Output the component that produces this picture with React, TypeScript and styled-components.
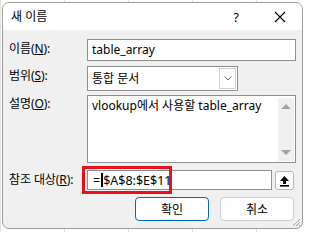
import React from 'react';
import styled, { createGlobalStyle } from 'styled-components';

const GlobalStyle = createGlobalStyle`
  html, body {
    margin: 0;
    padding: 0;
    background: #ffffff;
  }
  body {
    font-family: "Noto Sans", "Noto Sans CJK KR", sans-serif;
    font-size: 12px;
    color: #000;
  }
`;

const Backdrop = styled.div`
  width: 303px;
  height: 232px;
  overflow: hidden;
  padding: 2px 0 0 2px;
  box-sizing: border-box;
  background: linear-gradient(to right, #e2e2e2 1px, transparent 1px) 0 0 / 64px 100%, #fff;
`;

const Window = styled.div`
  position: relative;
  width: 301px;
  height: 227px;
  box-sizing: border-box;
  border: 1px solid #9c9c9c;
  border-radius: 7px;
  background: #f0f0f0;
  overflow: hidden;
  display: flex;
  flex-direction: column;
`;

const TitleBar = styled.div`
  height: 27px;
  flex: none;
  background: #fff;
  display: flex;
  align-items: center;
  padding-left: 8px;
  font-size: 12px;
  line-height: 14px;
`;

const Title = styled.span`
  flex: 1;
  padding-top: 1px;
`;

const TitleButton = styled.span`
  width: 44px;
  height: 27px;
  display: flex;
  align-items: center;
  justify-content: center;
  font-size: 13px;
`;

const Body = styled.div`
  padding: 9px 6px 0 6px;
  display: flex;
  flex-direction: column;
`;

const Row = styled.div<{ $height: number; $gap?: number }>`
  display: grid;
  grid-template-columns: 78px 1fr;
  height: ${p => p.$height}px;
  margin-top: ${p => p.$gap ?? 0}px;
`;

const Label = styled.label<{ $offset?: number }>`
  padding-top: ${p => p.$offset ?? 3}px;
  line-height: 14px;
  white-space: nowrap;
  letter-spacing: -0.1px;
`;

const TextBox = styled.div`
  box-sizing: border-box;
  border: 1px solid #8f8f8f;
  background: #fff;
  padding: 3px 4px 0 4px;
  line-height: 14px;
  white-space: nowrap;
`;

const SelectBox = styled(TextBox)`
  width: 151px;
  display: flex;
  padding: 0;
  align-items: stretch;
`;

const SelectValue = styled.span`
  flex: 1;
  padding: 5px 4px 0 4px;
`;

const DropButton = styled.span`
  width: 15px;
  margin: 1px;
  border: 1px solid #d0d0d0;
  display: flex;
  align-items: center;
  justify-content: center;
`;

const AreaBox = styled(TextBox)`
  display: flex;
  padding: 0;
`;

const AreaText = styled.span`
  flex: 1;
  padding: 3px 4px;
  color: #000;
`;

const ScrollTrack = styled.div`
  width: 16px;
  margin: 2px 1px 1px 0;
  background: #f0f0f0;
  display: flex;
  flex-direction: column;
  justify-content: space-between;
  align-items: center;
  padding: 6px 0;
`;

const Arrow = styled.span<{ $down?: boolean }>`
  width: 0;
  height: 0;
  border-left: 5px solid transparent;
  border-right: 5px solid transparent;
  ${p => (p.$down ? 'border-top: 5px solid #a3a3a3;' : 'border-bottom: 5px solid #a3a3a3;')}
`;

const RefField = styled.div`
  position: relative;
  display: flex;
  gap: 3px;
`;

const RefInput = styled(TextBox)`
  flex: 1;
  padding: 2px 4px 0 5px;
  font-size: 12.5px;
`;

const Caret = styled.span`
  display: inline-block;
  width: 2px;
  height: 14px;
  background: #000;
  vertical-align: -2px;
  margin: 0 0.5px;
`;

const Highlight = styled.div`
  position: absolute;
  left: -5px;
  top: -4px;
  width: 90px;
  height: 28px;
  box-sizing: border-box;
  border: 3px solid #e8111d;
  pointer-events: none;
`;

const CollapseButton = styled.span`
  width: 19px;
  box-sizing: border-box;
  border: 1px solid #b8b8b8;
  border-radius: 3px;
  background: #fff;
  display: flex;
  align-items: center;
  justify-content: center;
  margin: 1px 2px 0 0;
`;

const ButtonRow = styled.div`
  display: flex;
  justify-content: flex-end;
  gap: 11px;
  padding-right: 2px;
  margin-top: 7px;
`;

const DialogButton = styled.button<{ $primary?: boolean }>`
  width: 74px;
  height: 24px;
  box-sizing: border-box;
  border: 1px solid ${p => (p.$primary ? '#0067c0' : '#cccccc')};
  border-radius: 4px;
  background: #fdfdfd;
  font-family: "Noto Sans CJK KR", sans-serif;
  font-size: 12px;
  line-height: 14px;
  color: #000;
  padding: 0;
`;

const Grip = styled.svg`
  position: absolute;
  right: 1px;
  bottom: 1px;
`;

export default function App() {
  return (
    <>
      <GlobalStyle />
      <Backdrop>
        <Window>
          <TitleBar>
            <Title>새 이름</Title>
            <TitleButton>?</TitleButton>
            <TitleButton>
              <svg width="12" height="12" viewBox="0 0 12 12">
                <path d="M1 1 L11 11 M11 1 L1 11" stroke="#000" strokeWidth="1.1" />
              </svg>
            </TitleButton>
          </TitleBar>
          <Body>
            <Row $height={22}>
              <Label>
                이름(<u>N</u>):
              </Label>
              <TextBox>table_array</TextBox>
            </Row>

            <Row $height={25} $gap={5}>
              <Label>
                범위(<u>S</u>):
              </Label>
              <SelectBox>
                <SelectValue>통합 문서</SelectValue>
                <DropButton>
                  <svg width="8" height="5" viewBox="0 0 8 5">
                    <path d="M0.5 0.5 L4 4 L7.5 0.5" fill="none" stroke="#666" strokeWidth="1" />
                  </svg>
                </DropButton>
              </SelectBox>
            </Row>

            <Row $height={68} $gap={4}>
              <Label $offset={2}>
                설명(<u>O</u>):
              </Label>
              <AreaBox>
                <AreaText>vlookup에서 사용할 table_array</AreaText>
                <ScrollTrack>
                  <Arrow />
                  <Arrow $down />
                </ScrollTrack>
              </AreaBox>
            </Row>

            <Row $height={20} $gap={7}>
              <Label $offset={3}>
                참조 대상(<u>R</u>):
              </Label>
              <RefField>
                <RefInput>
                  =<Caret />$A$8:$E$11
                </RefInput>
                <CollapseButton>
                  <svg width="11" height="12" viewBox="0 0 11 12">
                    <path d="M5.5 1 L10 6 L7 6 L7 9 L4 9 L4 6 L1 6 Z" fill="#000" />
                    <rect x="1" y="10" width="9" height="1.6" fill="#000" />
                  </svg>
                </CollapseButton>
                <Highlight />
              </RefField>
            </Row>

            <ButtonRow>
              <DialogButton $primary>확인</DialogButton>
              <DialogButton>취소</DialogButton>
            </ButtonRow>
          </Body>
          <Grip width="10" height="10" viewBox="0 0 10 10">
            <path d="M9 2 L2 9 M9 5 L5 9 M9 8 L8 9" stroke="#a0a0a0" strokeWidth="1" />
          </Grip>
        </Window>
      </Backdrop>
    </>
  );
}
